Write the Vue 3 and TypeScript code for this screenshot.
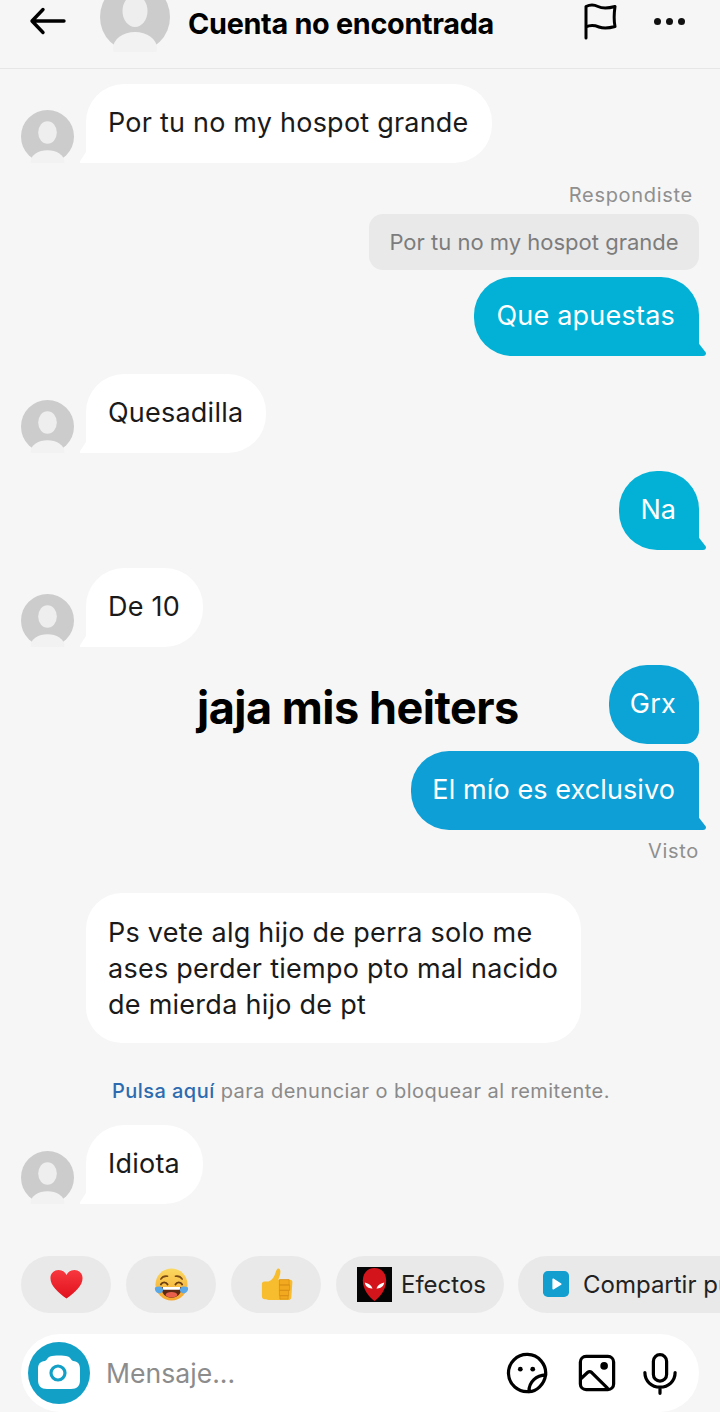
<script setup lang="ts">
const chips = ['heart', 'laugh', 'thumb']
</script>

<template>
  <div class="screen">
    <header class="topbar">
      <svg class="back" viewBox="0 0 40 40" fill="none" stroke="#000" stroke-width="3.4" stroke-linecap="round" stroke-linejoin="round"><path d="M36 20H5M15 8.500 4 20l11 11.500" /></svg>
      <div class="head-avatar">
        <svg viewBox="0 0 70 70"><circle cx="35" cy="35" r="35" fill="#cccccc" /><ellipse cx="35" cy="29" rx="12.500" ry="16" fill="#eeeeee" /><ellipse cx="35" cy="66" rx="22" ry="16" fill="#f2f2f2" /></svg>
      </div>
      <h1 class="title">Cuenta no encontrada</h1>
      <svg class="flag" viewBox="0 0 36 40" fill="none" stroke="#000" stroke-width="3" stroke-linecap="round" stroke-linejoin="round"><path d="M3 36V4.500c4-2 8-2 12 0s8 2.500 17 0c-1 7-1 15 0 20-7 2-12 2-16 .5s-9-2-13 0" /></svg>
      <div class="dots"><i></i><i></i><i></i></div>
    </header>

    <main class="thread">
      <div class="row in first">
        <svg class="avatar" viewBox="0 0 54 54"><circle cx="27" cy="27" r="27" fill="#cccccc" /><ellipse cx="27" cy="23" rx="9.500" ry="11.500" fill="#eeeeee" /><ellipse cx="27" cy="52" rx="17" ry="11" fill="#f2f2f2" /></svg>
        <div class="bubble white tail-left">Por tu no my hospot grande</div>
      </div>

      <div class="row out note-row"><span class="note respond">Respondiste</span></div>
      <div class="row out reply-row"><div class="reply">Por tu no my hospot grande</div></div>
      <div class="row out tiny-gap"><div class="bubble teal tail-right">Que apuestas</div></div>

      <div class="row in gap">
        <svg class="avatar" viewBox="0 0 54 54"><circle cx="27" cy="27" r="27" fill="#cccccc" /><ellipse cx="27" cy="23" rx="9.500" ry="11.500" fill="#eeeeee" /><ellipse cx="27" cy="52" rx="17" ry="11" fill="#f2f2f2" /></svg>
        <div class="bubble white tail-left">Quesadilla</div>
      </div>

      <div class="row out gap"><div class="bubble teal tail-right na">Na</div></div>

      <div class="row in gap">
        <svg class="avatar" viewBox="0 0 54 54"><circle cx="27" cy="27" r="27" fill="#cccccc" /><ellipse cx="27" cy="23" rx="9.500" ry="11.500" fill="#eeeeee" /><ellipse cx="27" cy="52" rx="17" ry="11" fill="#f2f2f2" /></svg>
        <div class="bubble white tail-left">De 10</div>
      </div>

      <div class="row out gap grx-row">
        <div class="caption">jaja mis heiters</div>
        <div class="bubble blue grx">Grx</div>
      </div>
      <div class="row out tiny-gap"><div class="bubble blue2 tail-right top-flat">El mío es exclusivo</div></div>
      <div class="row out seen-row"><span class="note">Visto</span></div>

      <div class="row in long-row">
        <div class="bubble white long">Ps vete alg hijo de perra solo me ases perder tiempo pto mal nacido de mierda hijo de pt</div>
      </div>

      <p class="report"><span class="link">Pulsa aquí</span> para denunciar o bloquear al remitente.</p>

      <div class="row in idiota-row">
        <svg class="avatar" viewBox="0 0 54 54"><circle cx="27" cy="27" r="27" fill="#cccccc" /><ellipse cx="27" cy="23" rx="9.500" ry="11.500" fill="#eeeeee" /><ellipse cx="27" cy="52" rx="17" ry="11" fill="#f2f2f2" /></svg>
        <div class="bubble white tail-left">Idiota</div>
      </div>
    </main>

    <div class="chips">
      <div v-for="c in chips" :key="c" class="chip small">
        <svg v-if="c === 'heart'" class="emoji" viewBox="0 0 36 36"><defs><linearGradient id="hg" x1="0" y1="0" x2="0" y2="1"><stop offset="0" stop-color="#f8383e" /><stop offset="1" stop-color="#e0101c" /></linearGradient></defs><path d="M18 32.500C9 25.500 1.500 19.500 1.500 11.500 1.500 6.500 5.300 3 9.800 3c3.500 0 6.500 2 8.200 5.200C19.700 5 22.700 3 26.200 3c4.500 0 8.300 3.500 8.300 8.500 0 8-7.500 14-16.500 21z" fill="url(#hg)" /></svg>
        <svg v-else-if="c === 'laugh'" class="emoji" viewBox="0 0 36 36"><defs><linearGradient id="lg" x1="0" y1="0" x2="0" y2="1"><stop offset="0" stop-color="#fbd961" /><stop offset="1" stop-color="#f5a52c" /></linearGradient></defs><circle cx="18" cy="18" r="16.500" fill="url(#lg)" /><path d="M7 12.500c1.500-2.500 4-3.500 7-3M29 12.500c-1.500-2.500-4-3.500-7-3" fill="none" stroke="#7a4a17" stroke-width="1.600" stroke-linecap="round" /><path d="M7 18c1.500-3 5.500-3 7 0M22 18c1.500-3 5.500-3 7 0" fill="none" stroke="#6b3e12" stroke-width="1.800" stroke-linecap="round" /><path d="M7.500 20.500h21c0 7-4.500 11-10.500 11S7.500 27.500 7.500 20.500z" fill="#5c2a12" /><path d="M9 20.500h18l-.5 3h-17z" fill="#fff" /><ellipse cx="18" cy="28.500" rx="6" ry="2.800" fill="#e8604c" /><path d="M1 21c3-1.500 6.500-1.500 8 1 1 2-.5 5-3.500 5C2.500 27 .5 24 1 21zM35 21c-3-1.500-6.500-1.500-8 1-1 2 .5 5 3.500 5 3 0 5-3 4.500-6z" fill="#5aa9e6" /></svg>
        <svg v-else class="emoji" viewBox="0 0 36 36"><path d="M3 17.500c0-1.500 1-2.500 2.500-2.500h3c3 0 6-3 7.500-6.500 1-2.500 1.500-5 2.800-6.500 1.500-1 3.200 0 3.200 2.500 0 3-1 6-2.200 8.500H32c1.800 0 2.500 1.500 2.300 3l-1 15c-.2 1.800-1.500 3-3 3H12c-3 0-4-.8-6-.8-1.800 0-3-1.200-3-2.800z" fill="#f8bd2e" /><path d="M21 13h10v5.500H21zM21 18.500h10.500V24H21zM21 24h9.500v5.500H21zM21.500 29.500h8.500v3.500h-8.500z" fill="#f3a91f" stroke="#d98f16" stroke-width=".8" /></svg>
      </div>

      <div class="chip effects">
        <svg class="spider" viewBox="0 0 36 36"><rect width="36" height="36" fill="#050505" /><path d="M18 1c7 0 12 5 12 13 0 9-6 17-12 21C12 31 6 23 6 14 6 6 11 1 18 1z" fill="#d3141b" /><path d="M8 16c3 .5 6.500 2.500 8 6-4 .5-7.500-2-8-6zM28 16c-3 .5-6.500 2.500-8 6 4 .5 7.500-2 8-6z" fill="#fff" /></svg>
        <span>Efectos</span>
      </div>

      <div class="chip share">
        <svg class="play" viewBox="0 0 28 28"><rect width="27" height="27" rx="5" fill="#129fd0" /><path d="M10.500 8.500v10l8-5z" fill="#fff" stroke="#fff" stroke-width="1.500" stroke-linejoin="round" /></svg>
        <span>Compartir publicación</span>
      </div>
    </div>

    <footer class="composer">
      <div class="camera">
        <svg viewBox="0 0 62 62"><path d="M22 14.500c5-1.200 13-1.200 18 0 2 .5 3 3.500 5 4.500 5 .5 7 3 7 8v11c0 6-3 9-9 9H19c-6 0-9-3-9-9V27c0-5 2-7.500 7-8 2-1 3-4 5-4.500z" fill="#fff" /><circle cx="30" cy="31" r="7" fill="none" stroke="#13a0c7" stroke-width="3.200" /></svg>
      </div>
      <span class="placeholder">Mensaje...</span>
      <div class="tools">
        <svg class="sticker" viewBox="0 0 44 44" fill="none" stroke="#000" stroke-width="3.400" stroke-linecap="round" stroke-linejoin="round"><path d="M24 41.500A19.500 19.500 0 1 1 41.500 24" /><path d="M41.500 24C32 24.500 24 31 24 41.500c8 0 16-7.500 17.500-17.500z" /><circle cx="15" cy="18" r="2.500" fill="#000" stroke="none" /><circle cx="28" cy="18" r="2.500" fill="#000" stroke="none" /></svg>
        <svg class="gallery" viewBox="0 0 40 40" fill="none" stroke="#000" stroke-width="3.400" stroke-linecap="round" stroke-linejoin="round"><rect x="2.500" y="2.500" width="35" height="35" rx="6" /><path d="M3 26 10 19.500c1.500-1.300 3-1.300 4.500 0L31 36" /><circle cx="27.500" cy="12.500" r="4" fill="#000" stroke="none" /></svg>
        <svg class="mic" viewBox="0 0 36 44" fill="none" stroke="#000" stroke-width="3.400" stroke-linecap="round" stroke-linejoin="round"><rect x="11" y="2" width="14" height="28" rx="7" /><path d="M2 21c0 9 7 15.500 16 15.500S34 30 34 21M18 36.500V43" /></svg>
      </div>
    </footer>
  </div>
</template>

<style>
html, body { margin: 0; padding: 0; background: #f6f6f6; }
</style>

<style scoped>
.screen {
  width: 720px;
  height: 1412px;
  overflow: hidden;
  background: #f6f6f6;
  font-family: Inter, "Liberation Sans", sans-serif;
  color: #111;
  display: flex;
  flex-direction: column;
}
.topbar {
  height: 69px;
  flex: none;
  box-sizing: border-box;
  border-bottom: 1px solid #e6e6e6;
  display: flex;
  align-items: center;
  padding-left: 28px;
  overflow: hidden;
  position: relative;
}
.back { width: 40px; height: 40px; flex: none; margin-top: -26px; }
.head-avatar { width: 70px; height: 70px; flex: none; margin: -35px 0 0 32px; }
.head-avatar svg { width: 70px; height: 70px; display: block; }
.title {
  margin: -22px 0 0 18px;
  font-size: 28.8px;
  font-weight: 700;
  letter-spacing: -0.3px;
  color: #000;
  white-space: nowrap;
}
.flag { width: 36px; height: 40px; flex: none; margin: -25px 0 0 89px; }
.dots { display: flex; gap: 5px; margin: -25px 0 0 35px; }
.dots i { width: 7px; height: 7px; border-radius: 50%; background: #111; }

.thread { flex: 1; padding: 0 21px; display: flex; flex-direction: column; position: relative; }
.row { display: flex; align-items: flex-end; flex: none; }
.row.out { justify-content: flex-end; }
.row.in .avatar { margin-right: 12px; }
.first { margin-top: 15px; }
.gap { margin-top: 18px; }
.tiny-gap { margin-top: 7px; }
.note-row { margin-top: 20px; }
.reply-row { margin-top: 7px; }
.seen-row { margin-top: 9px; }
.long-row { margin-top: 30px; padding-left: 65px; }
.idiota-row { margin-top: 22px; }
.avatar { width: 53px; height: 53px; flex: none; }

.bubble {
  position: relative;
  box-sizing: border-box;
  min-height: 79px;
  padding: 21px 24px 21px 22px;
  font-size: 27px;
  line-height: 36px;
  letter-spacing: 0.22px;
  border-radius: 38px;
  white-space: nowrap;
}
.white { background: #fff; color: #1a1a1a; padding-right: 23px; }
.teal { background: #02b1d5; color: #fff; }
.na { letter-spacing: 0; padding-left: 21px; padding-right: 23px; }
.blue { background: #0ca4d6; color: #fff; }
.blue2 { background: #0e9fd6; color: #fff; padding-left: 21px; letter-spacing: 0.1px; }
.long { white-space: normal; width: 495px; height: 150px; padding: 22px; border-radius: 36px; letter-spacing: 0.26px; }
.grx { padding-left: 21px; padding-right: 23px; border-bottom-right-radius: 14px; border-top-right-radius: 38px; }
.top-flat { border-top-right-radius: 14px; }

.tail-left { border-bottom-left-radius: 0; }
.tail-left::before {
  content: "";
  position: absolute;
  left: -6px;
  bottom: 0;
  width: 7px;
  height: 11px;
  background: #fff;
  clip-path: polygon(85% 0, 100% 0, 100% 100%, 0 100%, 0 85%);
}
.tail-right { border-bottom-right-radius: 0; }
.tail-right::after {
  content: "";
  position: absolute;
  right: -7px;
  bottom: 0;
  width: 8px;
  height: 12px;
  background: inherit;
  border-radius: 0 0 3px 0;
  clip-path: polygon(0 0, 15% 0, 100% 72%, 100% 100%, 0 100%);
}

.note { font-size: 20px; line-height: 24px; color: #8f8f8f; letter-spacing: 0.7px; }
.respond { margin-right: 6px; }
.reply {
  box-sizing: border-box;
  width: 330px;
  height: 56px;
  border-radius: 14px;
  background: #e9e9e9;
  color: #7c7c7c;
  font-size: 22px;
  line-height: 56px;
  text-align: center;
  white-space: nowrap;
}
.grx-row { position: relative; }
.caption {
  position: absolute;
  left: 176px;
  top: 13px;
  font-size: 45px;
  line-height: 60px;
  font-weight: 700;
  letter-spacing: -0.5px;
  color: #000;
  white-space: nowrap;
}
.report {
  margin: 36px 0 0 91px;
  font-size: 20px;
  line-height: 24px;
  color: #8a8a8a;
  letter-spacing: 0.45px;
  white-space: nowrap;
}
.link { color: #2d6bb0; font-weight: 500; }

.chips {
  flex: none;
  display: flex;
  gap: 15px;
  padding-left: 21px;
  height: 57px;
  margin-top: 0;
  white-space: nowrap;
}
.chip {
  height: 57px;
  box-sizing: border-box;
  border-radius: 29px;
  background: #e9e9e9;
  display: flex;
  align-items: center;
  font-size: 24px;
  color: #222;
  flex: none;
}
.small { width: 90px; justify-content: center; }
.emoji { width: 35px; height: 35px; }
.effects { width: 168px; padding-left: 21px; gap: 9px; margin-left: 0; }
.spider { width: 35px; height: 35px; flex: none; }
.share { padding-left: 25px; gap: 13px; width: 360px; margin-left: -1px; }
.play { width: 27px; height: 27px; flex: none; }

.composer {
  flex: none;
  margin: 21px 21px 0;
  height: 78px;
  border-radius: 39px;
  background: #fff;
  display: flex;
  align-items: center;
  padding-left: 7px;
}
.camera {
  width: 62px;
  height: 62px;
  border-radius: 50%;
  background: #13a0c7;
  flex: none;
}
.camera svg { width: 62px; height: 62px; display: block; }
.placeholder { margin-left: 16px; font-size: 26.6px; color: #8c8c8c; }
.tools { margin-left: auto; display: flex; align-items: center; margin-right: 22px; }
.sticker { width: 42px; height: 42px; }
.gallery { width: 38px; height: 38px; margin-left: 30px; }
.mic { width: 34px; height: 43px; margin-left: 27px; }
</style>
